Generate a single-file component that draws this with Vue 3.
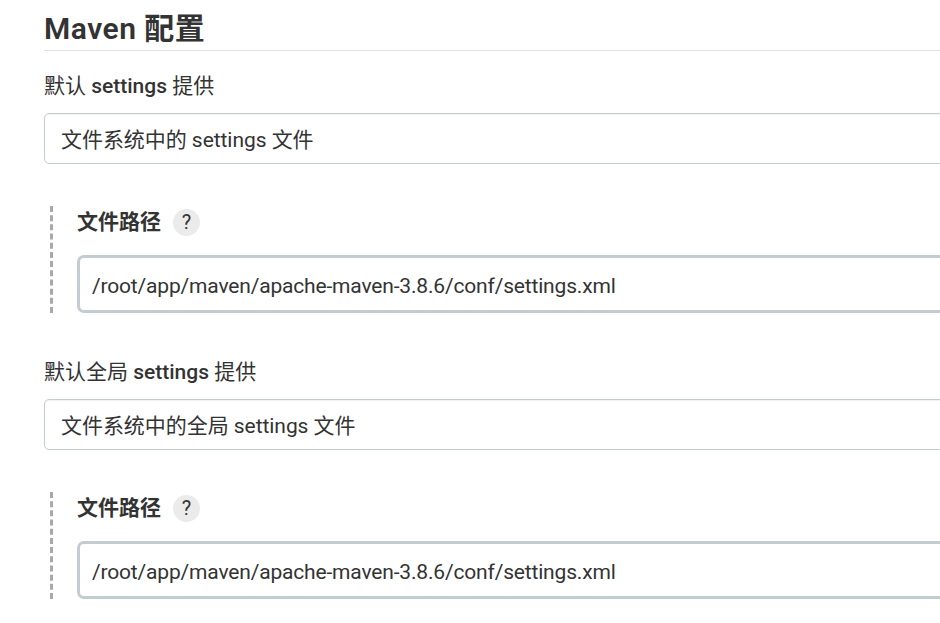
<template>
  <div class="page">
    <h2 class="title">Maven 配置</h2>

    <section v-for="group in groups" :key="group.label" class="group">
      <div class="label">{{ group.prefix }} <b class="medium">settings</b> 提供</div>
      <div class="select">{{ group.selected }}</div>
      <div class="nested">
        <div class="nested-head">
          <span class="nested-label">文件路径</span>
          <span class="help">?</span>
        </div>
        <div class="path-input">{{ group.path }}</div>
      </div>
    </section>
  </div>
</template>

<script setup>
const path = "/root/app/maven/apache-maven-3.8.6/conf/settings.xml";

const groups = [
  { label: "local", prefix: "默认", selected: "文件系统中的 settings 文件", path },
  { label: "global", prefix: "默认全局", selected: "文件系统中的全局 settings 文件", path },
];
</script>

<style>
html,
body {
  margin: 0;
  background: #fff;
  overflow: hidden;
}
</style>

<style scoped>
.page {
  width: 940px;
  height: 623px;
  box-sizing: border-box;
  padding-left: 44px;
  overflow: hidden;
  color: #333;
  font-family: Roboto, "Noto Sans CJK SC", sans-serif;
}

.title {
  width: 1000px;
  height: 50px;
  margin: 0;
  border-bottom: 1px solid #dcdfe3;
  font-size: 30px;
  line-height: 58px;
  font-weight: 600;
  letter-spacing: 0.5px;
}

.group {
  width: 1000px;
  margin-bottom: 24px;
}

.label {
  height: 62px;
  font-size: 21px;
  line-height: 70px;
}

.medium {
  font-weight: 500;
}

.select {
  height: 51px;
  box-sizing: border-box;
  padding-left: 16px;
  border: 1px solid #c3ccd1;
  border-radius: 5px;
  box-shadow: inset 0 1px 1px rgba(0, 0, 0, 0.05);
  font-size: 21px;
  line-height: 53px;
  letter-spacing: -0.05px;
}

.nested {
  margin: 42px 0 0 6px;
  padding-left: 24px;
  border-left: 3px dashed #a9a9a9;
}

.nested-head {
  display: flex;
  align-items: center;
  gap: 12px;
  height: 32px;
  padding-bottom: 17px;
}

.nested-label {
  font-size: 21px;
  font-weight: 700;
  line-height: 30px;
}

.help {
  width: 27px;
  height: 27px;
  border-radius: 50%;
  background: #ebebeb;
  text-align: center;
  font-size: 20px;
  line-height: 27px;
  font-weight: 400;
}

.path-input {
  height: 58px;
  box-sizing: border-box;
  padding-left: 12px;
  border: 3px solid #c3ccd1;
  border-radius: 7px;
  font-size: 21px;
  line-height: 56px;
  letter-spacing: -0.17px;
}
</style>
